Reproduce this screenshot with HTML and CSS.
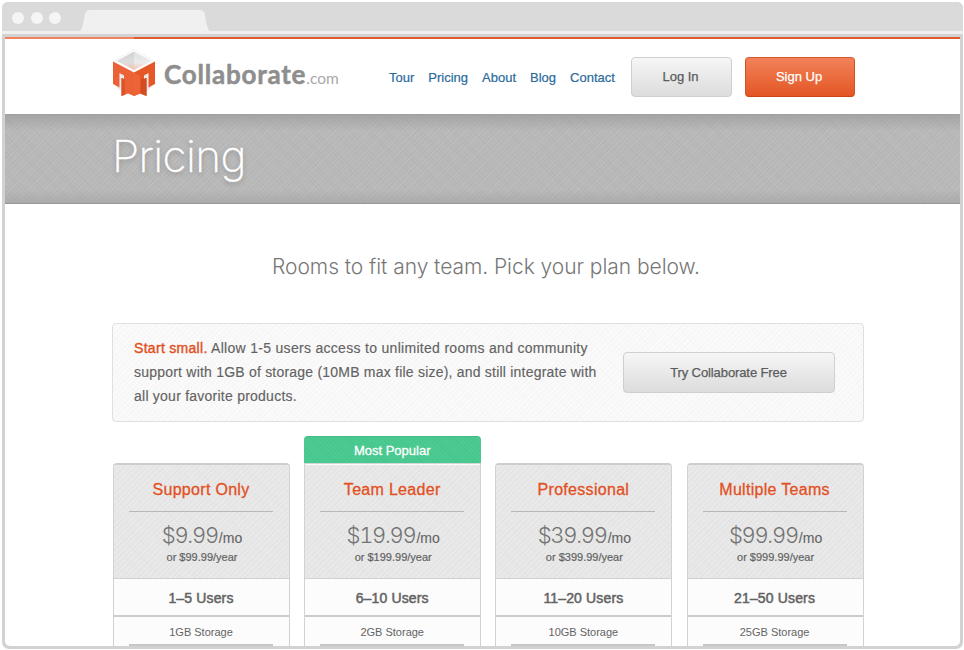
FILE: index.html
```html
<!DOCTYPE html>
<html lang="en">
<head>
<meta charset="utf-8">
<title>Collaborate.com – Pricing</title>
<link rel="stylesheet" href="styles.css">
</head>
<body>
<div class="browser">
  <div class="chrome">
    <i class="dot"></i><i class="dot"></i><i class="dot"></i>
    <svg class="tab" width="130" height="21" viewBox="0 0 130 21"><path d="M0 21C3 20 4 5 6 2Q7 0 9 0H120Q123 0 124 2C126 6 126 19 130 21Z" fill="#f0f0f0"/></svg>
  </div>
  <div class="page">
    <div class="accent"></div>
    <header class="header">
      <a class="logo">
        <svg width="46" height="52" viewBox="0 0 46 52">
          <defs>
            <linearGradient id="inside" x1="0" y1="0" x2="0" y2="1"><stop offset="0" stop-color="#d2d2d2"/><stop offset=".6" stop-color="#dedddd"/><stop offset="1" stop-color="#f4bfad"/></linearGradient>
            <linearGradient id="inside2" x1="0" y1="0" x2="0" y2="1"><stop offset="0" stop-color="#e0e0e0"/><stop offset=".6" stop-color="#ebebeb"/><stop offset="1" stop-color="#f6c3b1"/></linearGradient>
          </defs>
          <path d="M4 38L11 44V39ZM42 38L35 44V39Z" fill="#ececec"/>
          <path d="M23 1.500L44 13.500 23 24.500 2 13.500Z" fill="#fff" stroke="#eeeae8" stroke-width=".7"/>
          <path d="M23 3.500V22L5.500 13Z" fill="url(#inside)"/>
          <path d="M23 3.500V22L40.500 13Z" fill="url(#inside2)"/>
          <path d="M8.500 24L14 27V34L10 40H8.500ZM37.500 24L32 27V34L36 40H37.500Z" fill="#f1e9e6"/>
          <path d="M2 13.500L23 24.500V48L17 45.500 10.500 48V30L13 31V27.500L8.500 25V39.500L2 36Z" fill="#ec6237"/>
          <path d="M44 13.500L23 24.500V48L29 45.500 35.500 48V30L33 31V27.500L37.500 25V39.500L44 36Z" fill="#e65727"/>
          <path d="M23 24.500V48L29 45.500V28Z" fill="#ed6436"/>
          <path d="M30 31.500L35.500 30V48L29.500 45.500Z" fill="#d24e22"/>
          <path d="M10.500 30L14 31.500V46.700L10.500 48Z" fill="#dd542a"/>
        </svg>
        <span class="wordmark">Collaborate</span><span class="tld">.com</span>
      </a>
      <nav class="nav"><a>Tour</a><a>Pricing</a><a>About</a><a>Blog</a><a>Contact</a></nav>
      <a class="btn login"><span>Log In</span></a>
      <a class="btn signup"><span>Sign Up</span></a>
    </header>
    <div class="hero"><h1>Pricing</h1></div>
    <main>
      <h2>Rooms to fit any team. Pick your plan below.</h2>
      <section class="promo">
        <p><span class="l1"><b>Start small.</b> Allow 1-5 users access to unlimited rooms and community</span><br><span class="l2">support with 1GB of storage (10MB max file size), and still integrate with</span><br><span class="l3">all your favorite products.</span></p>
        <a class="btn try"><span>Try Collaborate Free</span></a>
      </section>
      <section class="plans">
        <article class="plan">
          <div class="box"><div class="top"><h3>Support Only</h3><div class="price"><strong>$9.99</strong><span>/mo</span></div><div class="year">or $99.99/year</div></div><div class="users">1–5 Users</div><div class="storage">1GB Storage</div></div>
        </article>
        <article class="plan popular">
          <div class="ribbon">Most Popular</div>
          <div class="box"><div class="top"><h3>Team Leader</h3><div class="price"><strong>$19.99</strong><span>/mo</span></div><div class="year">or $199.99/year</div></div><div class="users">6–10 Users</div><div class="storage">2GB Storage</div></div>
        </article>
        <article class="plan">
          <div class="box"><div class="top"><h3>Professional</h3><div class="price"><strong>$39.99</strong><span>/mo</span></div><div class="year">or $399.99/year</div></div><div class="users">11–20 Users</div><div class="storage">10GB Storage</div></div>
        </article>
        <article class="plan">
          <div class="box"><div class="top"><h3>Multiple Teams</h3><div class="price"><strong>$99.99</strong><span>/mo</span></div><div class="year">or $999.99/year</div></div><div class="users">21–50 Users</div><div class="storage">25GB Storage</div></div>
        </article>
      </section>
    </main>
  </div>
</div>
</body>
</html>
```

FILE: styles.css
```css
* { box-sizing: border-box; }
body { margin: 0; width: 964px; height: 650px; padding: 2px 0 0 2px; background: #fff; overflow: hidden; font-family: "Liberation Sans", Arial, sans-serif; color: #636363; }
h1, h2, h3, p { margin: 0; font-weight: 400; }
.browser { width: 961px; height: 647px; border-radius: 6px 6px 7px 7px; background: #d2d2d2; overflow: hidden; display: flex; flex-direction: column; }
.chrome { flex: none; height: 32px; background: #dadada; border-bottom: 3px solid #efefef; display: flex; align-items: center; padding-left: 10px; gap: 6.500px; }
.dot { width: 12px; height: 12px; border-radius: 50%; background: #f5f5f5; margin-top: 2px; }
.tab { margin-left: 12px; align-self: flex-end; }
.page { flex: 1; min-height: 0; margin: 3px; background: #fff; border-radius: 0 0 5px 5px; overflow: hidden; }
.accent { height: 2px; background: linear-gradient(90deg, #f0835f 129px, #e05a2c 129px); }
.header { height: 75px; display: flex; align-items: center; padding-left: 106px; }
.logo { width: 278px; height: 52px; display: flex; align-items: center; margin-top: -5px; white-space: nowrap; }
.wordmark { font: 700 26px/30px Lato, sans-serif; color: #8e8e8e; margin: -1px 0 0 7px; letter-spacing: .78px; -webkit-text-stroke: .5px #8e8e8e; }
.tld { font: 400 15.500px/30px Lato, sans-serif; color: #a8a8a8; margin-top: 7px; }
.nav { width: 242px; display: flex; gap: 14px; padding-top: 2px; font-size: 13px; color: #2a6a9c; -webkit-text-stroke: .2px #2a6a9c; white-space: nowrap; }
.btn { height: 41px; border-radius: 4px; display: flex; align-items: center; justify-content: center; border: 1px solid #cfcfcf; background: linear-gradient(#f6f6f6, #dcdcdc); color: #5c5c5c; font-size: 13px; -webkit-text-stroke: .25px; white-space: nowrap; }
.login { width: 101px; padding: 0 2px 2px 0; margin-top: 1px; }
.signup { width: 110px; margin: 1px 0 0 13px; padding: 0 2px 2px 0; color: #fff; border-color: #d9582f #d45127 #cb4316; background: linear-gradient(#f28259, #e35625); }
.login, .signup { height: 40px; }
.hero { height: 90px; padding-left: 107px; border-top: 1px solid #a0a0a0; border-bottom: 1px solid #979797; background: linear-gradient(rgba(145,145,145,.5), rgba(170,170,170,0) 18%, rgba(170,170,170,0) 85%, rgba(150,150,150,.4)), repeating-linear-gradient(45deg, rgba(120,120,120,.08) 0 1px, transparent 1px 3px), repeating-linear-gradient(-45deg, rgba(255,255,255,.06) 0 1px, transparent 1px 4px), #b9b9b9; }
h1 { font: 200 44px/82px Inter, sans-serif; color: #fff; text-shadow: 0 2px 5px rgba(0,0,0,.25); letter-spacing: -.6px; -webkit-text-stroke: .3px #fff; }
main { padding-left: 107px; }
h2 { margin-top: 47px; height: 32px; line-height: 32px; width: 748px; text-align: center; font-family: Inter, sans-serif; font-weight: 300; font-size: 21px; color: #777; letter-spacing: -.05px; white-space: nowrap; }
.promo { margin-top: 40px; width: 752px; height: 99px; border: 1px solid #e0e0e0; border-radius: 4px; display: flex; align-items: center; padding-left: 21px; background: repeating-linear-gradient(45deg, rgba(0,0,0,.012) 0 1px, transparent 1px 3px), repeating-linear-gradient(-45deg, #fbfbfb 0 2px, #f8f8f8 2px 4px); }
.promo p { width: 489px; margin-top: -2px; font-size: 14px; line-height: 24px; white-space: nowrap; -webkit-text-stroke: .15px; }
.promo b { font-weight: 400; color: #e2501f; -webkit-text-stroke: .4px; }
.l1 { letter-spacing: .3px; }
.l2 { letter-spacing: .215px; }
.l3 { letter-spacing: .24px; }
.try { width: 212px; padding-right: 1px; letter-spacing: -.1px; }
.plans { margin-top: 14px; display: flex; gap: 13px; padding-left: 1px; }
.plan { width: 178.200px; padding-top: 27px; flex: none; text-align: center; white-space: nowrap; }
.plan.popular { padding-top: 0; }
.ribbon { height: 27px; width: 177px; line-height: 29px; padding-right: 1px; border-radius: 4px 4px 0 0; background: repeating-linear-gradient(45deg, rgba(0,80,40,.05) 0 1px, transparent 1px 3px), #4bcb91; box-shadow: inset 0 1px #45b985; color: #fff; font-size: 13px; -webkit-text-stroke: .3px; }
.box { width: 177px; height: 190px; border: 1px solid #d2d2d2; border-top: 2px solid #cdcdcd; border-radius: 4px 4px 0 0; background: #fcfcfc; overflow: hidden; }
.popular .box { border-radius: 0; border-top: 1px solid #d5d5d5; padding-top: 1px; }
.top { height: 114px; border-bottom: 1px solid #d2d2d2; background: repeating-linear-gradient(45deg, rgba(0,0,0,.014) 0 1px, transparent 1px 3px), repeating-linear-gradient(-45deg, #eaeaea 0 2px, #e6e6e6 2px 4px); padding: 0 16px 0 15px; }
h3 { height: 47px; line-height: 49px; font-size: 16px; letter-spacing: .3px; color: #e2501f; -webkit-text-stroke: .3px; border-bottom: 1px solid #b8b8b8; }
.price { height: 36px; line-height: 46px; padding-left: 2px; }
.price strong { font: 300 22px/47px Inter, sans-serif; font-feature-settings: "tnum"; letter-spacing: -1.300px; margin-right: 1px; color: #747474; }
.price span { font-size: 14px; -webkit-text-stroke: .1px; }
.year { font-size: 11px; line-height: 18px; padding-left: 2px; -webkit-text-stroke: .2px; }
.users { height: 38px; line-height: 39px; padding-right: 1px; font-size: 14px; letter-spacing: .15px; border-bottom: 2px solid #cdcdcd; -webkit-text-stroke: .5px; }
.storage { height: 29px; line-height: 30px; margin: 0 16px 0 15px; font-size: 11px; border-bottom: 2px solid #c6c6c6; }
```
